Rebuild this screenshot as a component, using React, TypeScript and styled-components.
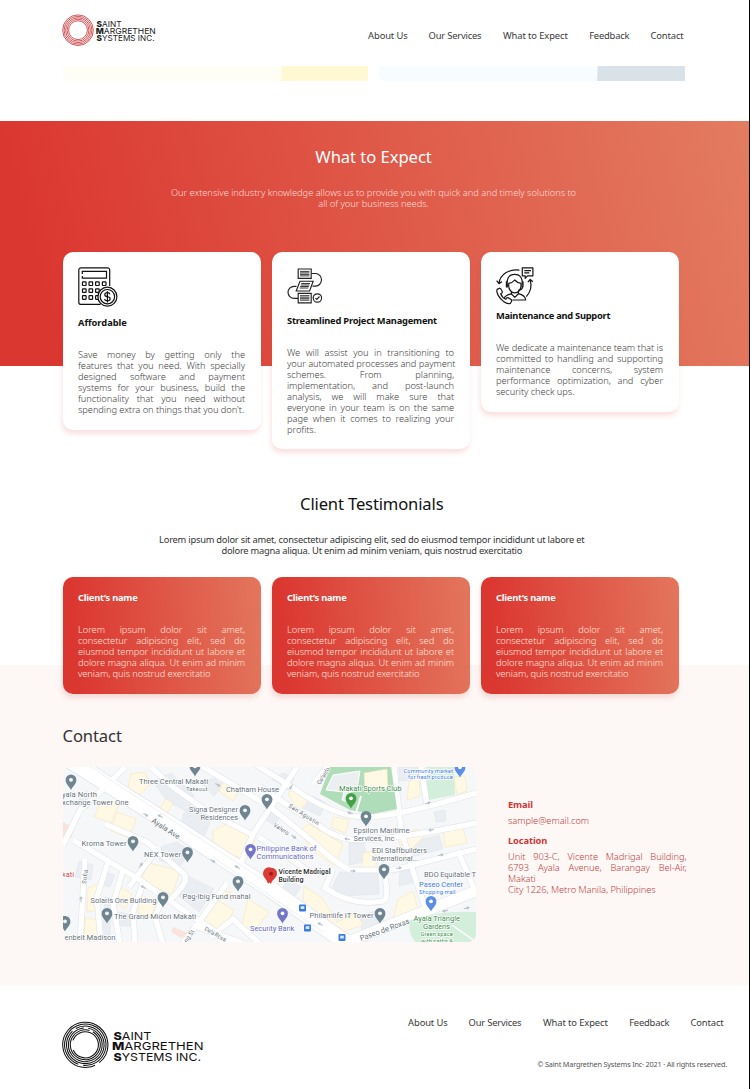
import React from "react";
import styled, { createGlobalStyle } from "styled-components";

const GlobalStyle = createGlobalStyle`
  * { box-sizing: border-box; }
  body {
    margin: 0;
    background: #fff;
    font-family: "Noto Sans", "Open Sans", sans-serif;
    font-size: 9.3px;
    line-height: 11px;
    color: #333;
  }
  h2, h3, p { margin: 0; }
`;

const Page = styled.div`
  width: 750px;
  height: 1089px;
  overflow: hidden;
  border-right: 1px solid #000;
  background: #fff;
`;

const Header = styled.header`
  display: flex;
  justify-content: space-between;
  align-items: flex-start;
  height: 66px;
  padding: 14px 65px 0 62px;
`;

const Nav = styled.nav<{ $top: number }>`
  display: flex;
  gap: 21px;
  padding-top: ${(p) => p.$top}px;
`;

const NavLink = styled.a<{ $w: number; $ls: number }>`
  width: ${(p) => p.$w}px;
  white-space: nowrap;
  font-size: 9.4px;
  letter-spacing: ${(p) => p.$ls}px;
  color: #3a3a3a;
`;

const Strips = styled.div`
  display: flex;
  gap: 11px;
  height: 54.5px;
  padding: 0 64px 0 63px;
`;

const Strip = styled.div<{ $from: string; $to: string; $w: number }>`
  width: ${(p) => p.$w}px;
  height: 15px;
  border-bottom-left-radius: 5px;
  background: linear-gradient(93deg, ${(p) => p.$from} 218px, ${(p) => p.$to} 219px);
`;

const Hero = styled.section`
  height: 245.5px;
  padding: 25px 62px 0 62.5px;
  background: linear-gradient(75deg, #db3731 8%, #e37c61 100%);
`;

const SectionHead = styled.div<{ $shift: number }>`
  padding-right: ${(p) => p.$shift}px;
`;

const Heading = styled.h2<{ $color: string; $left?: boolean; $ls?: number }>`
  font-weight: 400;
  font-size: 16.6px;
  line-height: 22px;
  letter-spacing: ${(p) => p.$ls ?? 0}px;
  text-align: ${(p) => (p.$left ? "left" : "center")};
  color: ${(p) => p.$color};
`;

const Intro = styled.p<{ $color: string; $ls: number; $weight: number }>`
  margin-top: 19px;
  text-align: center;
  font-weight: ${(p) => p.$weight};
  letter-spacing: ${(p) => p.$ls}px;
  color: ${(p) => p.$color};
`;

const IntroLine = styled.span`
  display: block;
  white-space: nowrap;
`;

const Cards = styled.div<{ $top: number }>`
  display: flex;
  align-items: flex-start;
  gap: 11px;
  margin-top: ${(p) => p.$top}px;
`;

const Card = styled.article<{ $tone: "light" | "red"; $h: number }>`
  position: relative;
  width: 198px;
  flex: none;
  height: ${(p) => p.$h}px;
  padding: 15px 15.5px;
  border-radius: 10px;
  color: ${(p) => (p.$tone === "red" ? "#ffe3dd" : "#3c3c3c")};
  background: ${(p) =>
    p.$tone === "red" ? "linear-gradient(85deg, #db3731 8%, #e3765d 100%)" : "#fff"};
  box-shadow: -1px 4px 5px rgba(219, 55, 49, 0.15);
`;

const IconBox = styled.div<{ $h: number }>`
  height: ${(p) => p.$h}px;
  svg { display: block; margin-left: -0.5px; }
`;

const CardTitle = styled.h3<{ $color: string; $ls: number }>`
  margin-bottom: 21px;
  font-size: 9.3px;
  line-height: 11px;
  font-weight: 700;
  white-space: nowrap;
  letter-spacing: ${(p) => p.$ls}px;
  color: ${(p) => p.$color};
`;

const Line = styled.span<{ $last?: boolean }>`
  display: block;
  font-weight: 300;
  white-space: nowrap;
  letter-spacing: -0.06px;
  text-align: justify;
  text-align-last: ${(p) => (p.$last ? "left" : "justify")};
`;

const Testimonials = styled.section`
  height: 299px;
  padding: 127px 62px 0 62.5px;
`;

const Contact = styled.section`
  height: 320px;
  padding: 60px 62px 0 62.5px;
  background: #fdf7f5;
`;

const ContactBody = styled.div`
  display: flex;
  gap: 32.5px;
  margin-top: 19.5px;
`;

const MapFrame = styled.div`
  width: 413px;
  height: 175px;
  flex: none;
  overflow: hidden;
  border-radius: 8px;
  svg { display: block; }
`;

const Details = styled.div`
  width: 178.5px;
  flex: none;
  padding-top: 32px;
  color: #bd3f3d;
`;

const Label = styled.h3`
  margin-bottom: 5px;
  font-size: 9.3px;
  line-height: 11px;
  letter-spacing: -0.1px;
  color: #cf3636;
`;

const Value = styled.p`
  margin-bottom: 9px;
`;

const Footer = styled.footer`
  display: flex;
  justify-content: space-between;
  height: 104px;
  padding: 36px 22px 0 62px;
`;

const FooterRight = styled.div`
  display: flex;
  flex-direction: column;
  align-items: flex-end;
`;

const FooterNav = styled(Nav)`
  margin-top: -4px;
  padding-right: 3px;
`;

const Copyright = styled.p`
  margin-top: 31px;
  font-size: 7.3px;
  line-height: 10px;
  letter-spacing: -0.19px;
  white-space: nowrap;
  color: #555;
`;

const links = [
  { text: "About Us", w: 39.5, ls: -0.12 },
  { text: "Our Services", w: 53.3, ls: -0.2 },
  { text: "What to Expect", w: 65.3, ls: -0.1 },
  { text: "Feedback", w: 40.3, ls: -0.2 },
  { text: "Contact", w: 33.5, ls: -0.12 },
];

const NavItems = () => (
  <>
    {links.map((l) => (
      <NavLink key={l.text} $w={l.w} $ls={l.ls}>{l.text}</NavLink>
    ))}
  </>
);

const HeaderLogo = () => (
  <svg width="96" height="33" viewBox="0 0 96 33">
    <g fill="none" stroke="#c8393b" strokeWidth="0.85">
      {[9.4, 10.9, 12.4, 13.9, 15.3].map((r) => <circle key={r} cx="16" cy="16.2" r={r} />)}
    </g>
    <g fill="#222" fontFamily="Inter, sans-serif" fontSize="8.1">
      <text x="34.5" y="12.8" textLength="25" lengthAdjust="spacingAndGlyphs"><tspan fontWeight="800">S</tspan>AINT</text>
      <text x="33.8" y="19.9" textLength="60" lengthAdjust="spacingAndGlyphs"><tspan fontWeight="800">M</tspan>ARGRETHEN</text>
      <text x="34.5" y="27" textLength="58" lengthAdjust="spacingAndGlyphs"><tspan fontWeight="800">S</tspan>YSTEMS INC.</text>
    </g>
  </svg>
);

const FooterLogo = () => (
  <svg width="144" height="48" viewBox="0 0 144 48">
    <g fill="none" stroke="#111" strokeWidth="1.05">
      <circle cx="23.3" cy="23.8" r="22.6" strokeDasharray="128 5 9" transform="rotate(85 23.3 23.8)" />
      <circle cx="23.3" cy="23.8" r="20.7" strokeDasharray="124 6" transform="rotate(110 23.3 23.8)" />
      <circle cx="23.3" cy="23.8" r="18.8" strokeDasharray="113 5" transform="rotate(240 23.3 23.8)" />
      <circle cx="23.3" cy="23.8" r="16.9" strokeDasharray="101 5" transform="rotate(280 23.3 23.8)" />
      <circle cx="23.3" cy="23.8" r="15" strokeDasharray="90 4" transform="rotate(300 23.3 23.8)" />
      <circle cx="23.3" cy="23.8" r="13.1" strokeDasharray="72 10" transform="rotate(200 23.3 23.8)" />
    </g>
    <g fill="#111" fontFamily="Inter, sans-serif" fontSize="10.9">
      <text x="51.5" y="18.7" textLength="38" lengthAdjust="spacingAndGlyphs"><tspan fontWeight="800">S</tspan>AINT</text>
      <text x="50" y="29.4" textLength="91.5" lengthAdjust="spacingAndGlyphs"><tspan fontWeight="800">M</tspan>ARGRETHEN</text>
      <text x="51.5" y="40.3" textLength="87.5" lengthAdjust="spacingAndGlyphs"><tspan fontWeight="800">S</tspan>YSTEMS INC.</text>
    </g>
  </svg>
);

const CalculatorIcon = () => (
  <svg width="40" height="40" viewBox="0 0 40 40" fill="none" stroke="#111" strokeWidth="1.2">
    <path d="M31.7 19V3a2.2 2.2 0 0 0-2.2-2.2H3A2.2 2.2 0 0 0 .8 3v32.2A2.2 2.2 0 0 0 3 37.4h19.5" />
    <path d="M4.3 7V4.3h24.2v6.8H4.3V9" />
    {[16.7, 23.6, 30.5].map((y, row) =>
      [6.3, 12.8, 19.4, 26.2].slice(0, 4 - (row ? 1 : 0)).map((x) => (
        <rect key={`${x}-${y}`} x={x - 1.8} y={y - 1.8} width="3.6" height="3.6" rx="0.5" strokeWidth="1.2" />
      ))
    )}
    <circle cx="29.4" cy="29.7" r="9.5" fill="#fff" />
    <circle cx="29.4" cy="29.7" r="7.2" />
    <path d="M32 27.4c-.3-1.2-1.3-1.7-2.6-1.7-1.5 0-2.6.7-2.6 2s1.1 1.7 2.6 2 2.7.8 2.7 2.1-1.2 2.1-2.7 2.1-2.6-.7-2.8-1.9M29.4 24.2v11.2" />
  </svg>
);

const ProcessIcon = () => (
  <svg width="40" height="40" viewBox="1 0 40 40" fill="none" stroke="#222" strokeWidth="1.15">
    <path d="M25.3 6.5H29.5a6 6.3 0 0 1 0 12.6H26.500M10.5 19.3H8a6 6 0 0 0 0 12H12" />
    <path d="M12.2 2h13v9.4h-13zM14 14.2h13.200L23.6 24H10.200zM12.2 26.400h13v9.4h-13z" />
    <path d="M14 4.400h9.400M14 5.900h9.400M14 7.400h9.400M14 8.900h9.400M15.300 16.500h8.700M14.800 18h8.600M14.200 19.500h8.700M13.700 21h8.600M14 28.700h9.400M14 30.200h9.400M14 31.700h9.400M14 33.200h9.400" strokeWidth="0.9" />
    <circle cx="31.4" cy="31" r="4.2" fill="#fff" />
    <path d="M29.4 31.2l1.4 1.3 2.700-3" />
  </svg>
);

const SupportIcon = () => (
  <svg width="40" height="40" viewBox="0 0 40 40" fill="none" stroke="#151515" strokeWidth="1.2" strokeLinejoin="round">
    <path d="M26.3.8h10.600v8H31.500L29.200 11.400V8.800H26.300zM28.300 3.600h6.700M28.300 5.900h5" />
    <path d="M23.400 3.200C13 1.600 4.200 7.500 3 16.200M.6 13.700L3 16.700l3-2.200" />
    <path d="M34.300 13c1.600 6.400.3 12-4 16.600M31.900 15.200l2.300-2.700 2.700 2.200" />
    <path d="M11.600 19.300c-1.600-7.600 1.400-12 7.100-12s8.700 4.400 7.100 12" />
    <path d="M12.700 16.300c2.600-.3 4.700-1.500 6-3.300 1.600 1.900 3.700 3 6.300 3.300v2.600c0 3.600-2.800 7-6.200 7s-6.100-3.400-6.100-7z" />
    <path d="M11.200 14.800h-.8v5h1.600M26.200 14.800h.8v5h-1.500M26.500 20c0 2-1.600 3-4.500 3.300" />
    <path d="M15.400 25v1.700c-3 .8-6.200 1.500-7 4.300M22.300 25v1.700c4.200 1 7 2.200 7.400 6.300H16.500M15.500 27l3.300 3.400 3.400-3.400" />
    <path d="M1.200 22.400l2.300-1.200c.9-.2 2 1.600 2.700 3.200.4 1-.3 1.800-1.500 2.400.9 2.600 2.600 4.400 5.100 5.400.7-1.300 1.600-1.700 2.500-1.300 1.500.7 3.600 2 3.500 2.900L14.500 36.200c-1.500.8-4 .4-7-1.800C3.400 31.200-.4 25.500 1.200 22.400z" />
  </svg>
);

type PinProps = { x: number; y: number; c?: string };
const Pin = ({ x, y, c = "#6f8591" }: PinProps) => (
  <g transform={`translate(${x} ${y})`}>
    <path d="M0 9.500C-1 6.500-5.400 3.500-5.400-.6a5.400 5.400 0 0 1 10.800 0C5.400 3.500 1 6.500 0 9.500z" fill={c} />
    <circle r="1.900" cy="-.7" fill="#fff" />
  </g>
);

const yellowBlocks = [
  "68,7 82,5 87,18 76,28 65,21", "37,34 57,35 48,56 32,50", "54,45 73,52 66,71 48,64",
  "96,43 103,32 110,36 103,48", "150,64 164,57 192,73 183,92 150,83", "86,96 117,104 109,128 78,113",
  "158,124 168,125 165,132 155,130", "150,130 171,143 158,167 138,158", "25,121 37,116 36,143 24,145",
  "56,119 69,127 62,142 53,135", "77,126 92,137 88,151 75,146", "22,151 36,153 36,173 21,173",
  "185,132 206,145 188,168 178,162", "160,15 177,23 170,34 156,24", "225,26 234,20 245,33 235,44",
  "238,62 246,57 280,77 272,99 246,81", "271,50 286,53 282,66 268,60", "335,70 354,62 362,68 350,81 337,78",
  "380,64 400,61 404,76 382,80", "300,86 313,84 313,103 299,102", "335,132 350,124 356,146 330,152",
  "241,119 259,131 274,155 293,145 300,158 270,168 240,140", "391,10 402,9 404,24 394,27", "346,15 356,10 357,29 344,33",
];
const greyBlocks = [
  "90,14 108,6 131,28 125,45 104,34", "120,47 133,38 149,50 142,68 119,58", "98,80 114,75 127,84 116,101 96,93",
  "23,24 33,29 24,42 14,35", "16,94 30,98 28,113 12,110", "41,105 52,108 47,120 38,118",
  "125,109 151,122 136,145 116,129", "138,16 151,11 161,18 151,29", "209,12 220,6 231,11 225,23",
  "250,29 263,36 257,49 240,41", "208,40 219,48 211,58 201,52", "286,76 301,76 304,94 286,98",
  "342,76 376,68 380,82 348,90", "277,105 315,107 316,127 280,129 269,120", "336,0 360,0 360,12 336,14",
  "337,101 350,98 354,115 336,119", "56,145 70,148 70,160 55,158", "42,130 48,131 47,170 39,172",
  "296,149 320,142 321,160 300,168", "371,45 382,43 383,54 373,55", "226,112 238,120 230,132 218,123",
];
const roads = [
  "M0 78L17 43L42 20L62 0", "M10 73L77 113L130 150L172 177", "M22 92L17 177", "M45 95L34 130L38 177", "M60 103L50 137L57 177",
  "M80 116L70 145L72 177", "M100 130L92 150L100 177", "M42 57L84 75L121 107Q128 113 107 133", "M66 120L96 80", "M164 116L134 158L119 177",
  "M130 158L185 178M148 170L170 152L196 176", "M137 -2L207 40L250 75Q275 98 287 103L330 103L413 82",
  "M190 -4L232 22Q270 49 300 50Q330 51 413 26", "M197 20L255 58Q272 72 295 73Q330 73 413 56",
  "M176 101L190 67L234 0", "M250 17L268 -4", "M270 102L262 121Q290 140 320 134Q327 132 321 105", "M88 0L110 20L145 45L190 68",
  "M331 0L338 62L350 104L362 140", "M358 0L364 38", "M196 70L247 105", "M395 84L413 126",
];
const arrows = [
  [83, 48, 30], [97, 49, 210], [150, 94, 30], [174, 100, 210], [80, 120, 210], [155, 18, 30], [18, 132, -90],
  [78, 98, -55], [228, 20, 120], [287, 46, 200], [365, 36, -15], [290, 104, 0], [336, 101, -12], [368, 63, 170],
  [231, 70, 35], [284, 72, 190], [257, 157, 210], [378, 88, -12], [382, 144, 165], [404, 141, -15],
];

const StreetMap = () => (
  <svg width="413" height="175" viewBox="0 0 413 175" fontFamily="Roboto, sans-serif">
    <rect width="413" height="175" fill="#f6f7f9" />
    <g fill="#eaedf1" stroke="#dfe3e8" strokeWidth="0.5">{greyBlocks.map((p) => <polygon key={p} points={p} />)}</g>
    <g fill="#fef8e4" stroke="#f8e6b4" strokeWidth="0.6">{yellowBlocks.map((p) => <polygon key={p} points={p} />)}</g>
    <polygon points="0,55 11,61 9,70 0,72" fill="#fbe3dd" />
    <polygon points="110,160 125,166 118,171 108,165" fill="#fbe3dd" />
    <polygon points="363,0 391,0 392,28 365,33" fill="#d3eedb" />
    <g fill="none" stroke="#e1e5ea" strokeWidth="6.4">{roads.map((d) => <path key={d} d={d} />)}</g>
    <g fill="none" stroke="#e1e5ea">
      <path d="M8 -6L115 62L207 122L285 177" strokeWidth="17" />
      <path d="M272 180L347 150L413 124" strokeWidth="12" />
    </g>
    <g fill="none" stroke="#fff" strokeWidth="5.2">{roads.map((d) => <path key={d} d={d} />)}</g>
    <g fill="none" stroke="#fff">
      <path d="M8 -6L115 62L207 122L285 177" strokeWidth="15.6" />
      <path d="M272 180L347 150L413 124" strokeWidth="10.6" />
    </g>
    <path d="M28 0L205 116M150 90L260 165" stroke="#e6e9ee" strokeWidth="0.7" />
    <polygon points="267,0 328,0 334,42 309,47 287,43 257,27" fill="#afdcb9" />
    <polygon points="270,8 297,4 294,22 287,25 287,36 279,33 281,25 263,23" fill="#eceff2" stroke="#fff" />
    <polygon points="301,6 324,2 325,22 302,25" fill="#fef8e4" stroke="#f8e6b4" strokeWidth="0.6" />
    <path d="M293 46L298 29" stroke="#fff" strokeWidth="2" />
    <path d="M347 153Q380 143 413 145V175H352Q344 164 347 153z" fill="#d3eedb" />
    <path d="M389 158L413 175" stroke="#fff" strokeWidth="1.5" />
    <g fill="#b4bdc8">
      {arrows.map(([x, y, r]) => (
        <path key={`${x}-${y}`} d="M-3 -.5H0V-1.800L3 0L0 1.800V.5H-3z" transform={`translate(${x} ${y}) rotate(${r})`} />
      ))}
    </g>
    <Pin x={8} y={13.5} /><Pin x={132} y={0} /><Pin x={182} y={44} />
    <Pin x={204} y={33} /><Pin x={70} y={75} /><Pin x={124.5} y={86} /><Pin x={175} y={115} />
    <Pin x={100} y={131} /><Pin x={44} y={147} /><Pin x={2} y={155} />
    <Pin x={187.5} y={83} c="#7477c8" /><Pin x={219.5} y={147} c="#7477c8" />
    <Pin x={288} y={32} c="#43a047" /><Pin x={303} y={50} /><Pin x={321} y={103} /><Pin x={317} y={147} />
    <Pin x={368} y={135} c="#5c8ee6" /><Pin x={397} y={1} c="#5c8ee6" />
    <path d="M205 116.5C203.5 112 200 110 200 106.5a6 6 0 0 1 6-6.2q1 0 2 .4 6 .3 6 6.2C214 110.5 208.5 113 208 117l-1.5-1.5z" fill="#db3b34" />
    <circle cx="208" cy="106.7" r="2" fill="#9c1f1a" />
    {[[239.5, 141], [244.5, 161], [279, 170.5]].map(([x, y]) => (
      <g key={x}>
        <rect x={x - 3.5} y={y - 3.5} width="7" height="7" rx="1" fill="#3a7de0" />
        <rect x={x - 1.8} y={y - 1.8} width="3.6" height="2.8" fill="#dce9fb" />
      </g>
    ))}
    <g fill="#66717a" fontSize="7.7" stroke="#fff" strokeWidth="1.4" paintOrder="stroke" strokeLinejoin="round">
      <text x="-1" y="29.5" textLength="35">yala North</text>
      <text x="-1" y="38" textLength="66.5">xchange Tower One</text>
      <text x="76" y="16.8" textLength="69">Three Central Makati</text>
      <text x="123" y="24" fontSize="6" textLength="21.5">Takeout</text>
      <text x="163" y="24.5" textLength="53">Chatham House</text>
      <text x="126" y="44.5" textLength="49">Signa Designer</text>
      <text x="137.5" y="53" textLength="37.5">Residences</text>
      <text x="18.5" y="79.3" textLength="45">Kroma Tower</text>
      <text x="81" y="90" textLength="37">NEX Tower</text>
      <text x="27.5" y="135.5" textLength="66">Solaris One Building</text>
      <text x="51" y="151.5" textLength="82">The Grand Midori Makati</text>
      <text x="1.5" y="172.5" textLength="51">enbelt Madison</text>
      <text x="119.5" y="131.5" textLength="68">Pag-Ibig Fund mahal</text>
      <text x="290.5" y="66" textLength="56">Epsilon Maritime</text>
      <text x="290.5" y="74" textLength="41">Services, Inc</text>
      <text x="309" y="85.5" textLength="55">EDI Staffbuilders</text>
      <text x="309" y="94" textLength="46">International...</text>
      <text x="361" y="109.5" textLength="52">BDO Equitable T</text>
      <text x="246.5" y="150.5" textLength="64">Philamlife IT Tower</text>
      <text transform="translate(88 55) rotate(33)" textLength="32">Ayala Ave</text>
      <text fontSize="6" transform="translate(225 40) rotate(32)" textLength="35">San Agustin</text>
      <text fontSize="6" transform="translate(210 59) rotate(33)" textLength="17">Valero</text>
      <text fontSize="6" transform="translate(257 18) rotate(-58)" textLength="19">Gallardo</text>
      <text fontSize="6" transform="translate(23 117) rotate(-82)" textLength="14">Sofia</text>
      <text fontSize="6" transform="translate(141 163) rotate(30)" textLength="24">Dela Rosa</text>
      <text fontSize="6" transform="translate(124 176) rotate(-57)" textLength="14">ng St</text>
      <text transform="translate(298 174) rotate(-20)" textLength="52">Paseo de Roxas</text>
      <g fill="#6265c2">
        <text x="193.5" y="84" textLength="60">Philippine Bank of</text>
        <text x="193.5" y="92" textLength="57">Communications</text>
        <text x="187" y="163.5" textLength="44.5">Security Bank</text>
      </g>
      <g fill="#3b78dc">
        <text x="340.5" y="6" fontSize="6" textLength="49.5">Community market</text>
        <text x="345" y="12" fontSize="6" textLength="45">for fresh produce</text>
        <text x="356" y="120" textLength="44">Paseo Center</text>
        <text x="356" y="126.5" fontSize="6" textLength="36.5">Shopping mall</text>
      </g>
      <g fill="#3c8a4a">
        <text x="276" y="23.5" textLength="62.5">Makati Sports Club</text>
        <text x="350.5" y="153.5" textLength="46.5">Ayala Triangle</text>
        <text x="360" y="162" textLength="27">Gardens</text>
        <text x="357.5" y="169" fontSize="6" textLength="32.5">Green space</text>
        <text x="358" y="175.5" fontSize="6" textLength="32">with paths &amp;</text>
      </g>
      <text x="-1" y="109.5" fill="#d4413b" textLength="12">kati</text>
      <g fill="#333" fontWeight="600" fontSize="7.2">
        <text x="215.5" y="106.5" textLength="52">Vicente Madrigal</text>
        <text x="215.5" y="114.5" textLength="25">Building</text>
      </g>
    </g>
  </svg>
);

const Lines = ({ lines }: { lines: string[] }) => (
  <p>
    {lines.map((t, i) => <Line key={t} $last={i === lines.length - 1}>{t}</Line>)}
  </p>
);

const services = [
  {
    title: "Affordable", ls: -0.02, icon: <CalculatorIcon />, iconH: 49.5, h: 178,
    lines: ["Save money by getting only the", "features that you need. With specially", "designed software and payment", "systems for your business, build the", "functionality that you need without", "spending extra on things that you don't."],
  },
  {
    title: "Streamlined Project Management", ls: -0.2, icon: <ProcessIcon />, iconH: 47.5, h: 197,
    lines: ["We will assist you in transitioning to", "your automated processes and payment", "schemes. From planning,", "implementation, and post-launch", "analysis, we will make sure that", "everyone in your team is on the same", "page when it comes to realizing your", "profits."],
  },
  {
    title: "Maintenance and Support", ls: -0.25, icon: <SupportIcon />, iconH: 42.5, h: 160,
    lines: ["We dedicate a maintenance team that is", "committed to handling and supporting", "maintenance concerns, system", "performance optimization, and cyber", "security check ups."],
  },
];

const quote = ["Lorem ipsum dolor sit amet,", "consectetur adipiscing elit, sed do", "eiusmod tempor incididunt ut labore et", "dolore magna aliqua. Ut enim ad minim", "veniam, quis nostrud exercitatio"];

export default function App() {
  return (
    <>
      <GlobalStyle />
      <Page>
        <Header>
          <HeaderLogo />
          <Nav $top={16}><NavItems /></Nav>
        </Header>
        <Strips>
          <Strip $w={305} $from="#fffef5" $to="#fff8d3" />
          <Strip $w={306} $from="#f6fcff" $to="#d9e2e8" />
        </Strips>
        <Hero>
          <SectionHead $shift={2.5}>
            <Heading $color="#fff" $ls={-0.05}>What to Expect</Heading>
            <Intro $color="#ffdcd5" $ls={-0.03} $weight={300}>
              <IntroLine>Our extensive industry knowledge allows us to provide you with quick and and timely solutions to</IntroLine>
              <IntroLine>all of your business needs.</IntroLine>
            </Intro>
          </SectionHead>
          <Cards $top={43.5}>
            {services.map((s) => (
              <Card key={s.title} $tone="light" $h={s.h}>
                <IconBox $h={s.iconH}>{s.icon}</IconBox>
                <CardTitle $color="#111" $ls={s.ls}>{s.title}</CardTitle>
                <Lines lines={s.lines} />
              </Card>
            ))}
          </Cards>
        </Hero>
        <Testimonials>
          <SectionHead $shift={6}>
            <Heading $color="#111" $ls={-0.15}>Client Testimonials</Heading>
            <Intro $color="#333" $ls={-0.22} $weight={400}>
              <IntroLine>Lorem ipsum dolor sit amet, consectetur adipiscing elit, sed do eiusmod tempor incididunt ut labore et</IntroLine>
              <IntroLine>dolore magna aliqua. Ut enim ad minim veniam, quis nostrud exercitatio</IntroLine>
            </Intro>
          </SectionHead>
          <Cards $top={21}>
            {[0, 1, 2].map((i) => (
              <Card key={i} $tone="red" $h={117}>
                <CardTitle $color="#fff" $ls={-0.22}>Client’s name</CardTitle>
                <Lines lines={quote} />
              </Card>
            ))}
          </Cards>
        </Testimonials>
        <Contact>
          <Heading $color="#333" $left $ls={-0.1}>Contact</Heading>
          <ContactBody>
            <MapFrame><StreetMap /></MapFrame>
            <Details>
              <Label>Email</Label>
              <Value><Line $last>sample@email.com</Line></Value>
              <Label>Location</Label>
              <Value>
                <Line>Unit 903-C, Vicente Madrigal Building,</Line>
                <Line>6793 Ayala Avenue, Barangay Bel-Air,</Line>
                <Line $last>Makati</Line>
                <Line $last>City 1226, Metro Manila, Philippines</Line>
              </Value>
            </Details>
          </ContactBody>
        </Contact>
        <Footer>
          <FooterLogo />
          <FooterRight>
            <FooterNav $top={0}><NavItems /></FooterNav>
            <Copyright>© Saint Margrethen Systems Inc· 2021 · All rights reserved.</Copyright>
          </FooterRight>
        </Footer>
      </Page>
    </>
  );
}
